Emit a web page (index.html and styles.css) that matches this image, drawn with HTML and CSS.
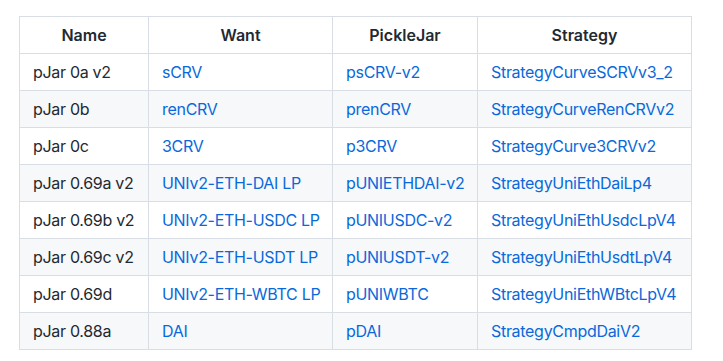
FILE: index.html
```html
<!DOCTYPE html>
<html>
<head>
<meta charset="utf-8">
<link rel="stylesheet" href="styles.css">
</head>
<body>
<div class="page">
<table class="jars">
<colgroup><col class="c1"><col class="c2"><col class="c3"><col class="c4"></colgroup>
<thead>
<tr><th>Name</th><th>Want</th><th>PickleJar</th><th>Strategy</th></tr>
</thead>
<tbody>
<tr><td>pJar 0a v2</td><td><a href="#">sCRV</a></td><td><a href="#">psCRV-v2</a></td><td><a href="#">StrategyCurveSCRVv3_2</a></td></tr>
<tr><td>pJar 0b</td><td><a href="#">renCRV</a></td><td><a href="#">prenCRV</a></td><td><a href="#">StrategyCurveRenCRVv2</a></td></tr>
<tr><td>pJar 0c</td><td><a href="#">3CRV</a></td><td><a href="#">p3CRV</a></td><td><a href="#">StrategyCurve3CRVv2</a></td></tr>
<tr><td>pJar 0.69a v2</td><td><a href="#">UNIv2-ETH-DAI LP</a></td><td><a href="#">pUNIETHDAI-v2</a></td><td><a href="#">StrategyUniEthDaiLp4</a></td></tr>
<tr><td>pJar 0.69b v2</td><td><a href="#">UNIv2-ETH-USDC LP</a></td><td><a href="#">pUNIUSDC-v2</a></td><td><a href="#">StrategyUniEthUsdcLpV4</a></td></tr>
<tr><td>pJar 0.69c v2</td><td><a href="#">UNIv2-ETH-USDT LP</a></td><td><a href="#">pUNIUSDT-v2</a></td><td><a href="#">StrategyUniEthUsdtLpV4</a></td></tr>
<tr><td>pJar 0.69d</td><td><a href="#">UNIv2-ETH-WBTC LP</a></td><td><a href="#">pUNIWBTC</a></td><td><a href="#">StrategyUniEthWBtcLpV4</a></td></tr>
<tr><td>pJar 0.88a</td><td><a href="#">DAI</a></td><td><a href="#">pDAI</a></td><td><a href="#">StrategyCmpdDaiV2</a></td></tr>
</tbody>
</table>
</div>
</body>
</html>
```
FILE: styles.css
```css
html, body {
  margin: 0;
  padding: 0;
  background: #ffffff;
}
.page {
  padding: 16px 0 0 19px;
}
.jars {
  border-collapse: collapse;
  border-spacing: 0;
  table-layout: fixed;
  width: 672px;
  font-family: Inter, "Liberation Sans", sans-serif;
  font-size: 16px;
  line-height: 24px;
  color: #24292f;
}
.c1 { width: 129px; }
.c2 { width: 184px; }
.c3 { width: 145px; }
.c4 { width: 214px; }
.jars th,
.jars td {
  border: 1px solid #d8dee4;
  padding: 6px 13px;
  white-space: nowrap;
}
.jars th {
  font-weight: 600;
  text-align: center;
}
.jars td {
  text-align: left;
  letter-spacing: -0.3px;
}
.jars tbody tr:nth-child(2n) {
  background: #f6f8fa;
}
.jars a {
  color: #0969da;
  text-decoration: none;
}
```
